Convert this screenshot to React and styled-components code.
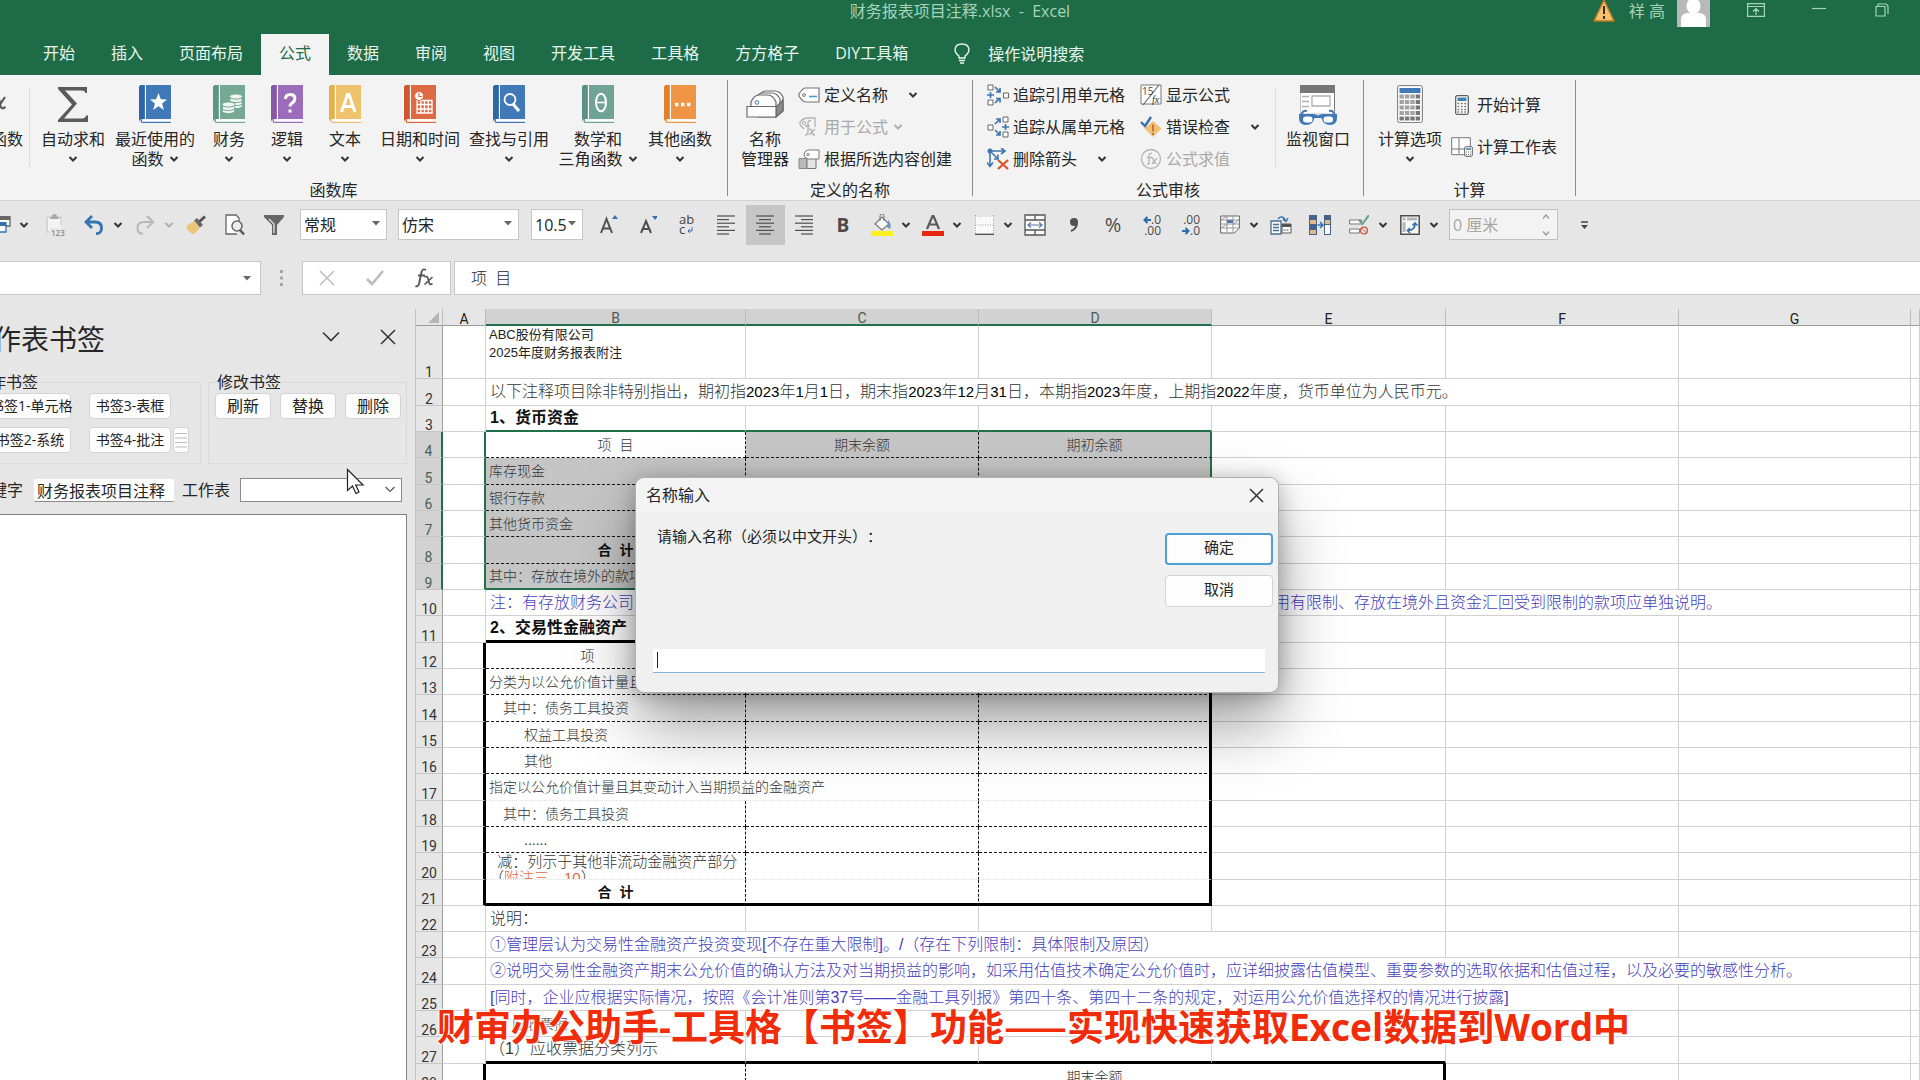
import React from "react";
import styled, { createGlobalStyle, css } from "styled-components";

const UI = `"Open Sans", "Noto Sans CJK SC", sans-serif`;
const CELL = `"Liberation Sans", "Noto Sans CJK SC", sans-serif`;

const Global = createGlobalStyle`
  *, *::before, *::after { box-sizing: border-box; }
  body { margin: 0; overflow: hidden; font: 16px/20px ${UI}; color: #262626; background: #e6e6e6; text-spacing-trim: space-all; }
  button, input, select { font: inherit; color: inherit; margin: 0; }
  button { background: none; border: 0; padding: 0; white-space: nowrap; }
  svg { display: block; flex: none; }
`;

const Page = styled.div`
  position: relative;
  display: flex;
  flex-direction: column;
  height: 100vh;
  overflow: hidden;
`;

/* ---------- title bar and tabs ---------- */

const TitleBar = styled.header`
  display: grid;
  grid-template-columns: 1fr auto 1fr;
  height: 34px;
  background: #1e6c47;
  color: #a6d3b9;
`;
const FileName = styled.h1`
  margin: 0;
  font-size: 16px;
  font-weight: 400;
  line-height: 22px;
  grid-column: 2;
  white-space: pre;
`;
const WindowTools = styled.div`
  display: flex;
  justify-content: flex-end;
  align-items: flex-start;
  padding-right: 31px;
`;
const UserName = styled.span`
  padding: 0 12px 0 14px;
  line-height: 22px;
  white-space: pre;
`;
const WindowButton = styled.button`
  display: flex;
  justify-content: flex-end;
  width: ${(p) => p.$w}px;
  padding-top: 3px;
`;
const Tabs = styled.nav`
  display: flex;
  height: 41px;
  padding-left: 25px;
  background: #1e6c47;
`;
const Tab = styled.button`
  padding: 0 18px;
  line-height: 38px;
  color: ${(p) => (p.$on ? "#1e6c47" : "#e9f5ee")};
  background: ${(p) => (p.$on ? "#f3f3f3" : "transparent")};
  display: flex;
  align-items: flex-start;
`;
const TellMe = styled.button`
  display: flex;
  align-items: center;
  gap: 18px;
  padding: 0 0 2px 28px;
  color: #e9f5ee;
`;

/* ---------- ribbon ---------- */

const Ribbon = styled.section`
  display: flex;
  height: 126px;
  background: #f3f3f3;
  border-bottom: 1px solid #d2d2d2;
`;
const Group = styled.div`
  display: flex;
  flex-direction: column;
  width: ${(p) => p.$w}px;
`;
const GroupBody = styled.div`
  display: flex;
  height: 105px;
  padding-left: ${(p) => p.$pad || 0}px;
`;
const GroupName = styled.div`
  text-align: center;
  padding-right: ${(p) => p.$pad || 0}px;
`;
const Separator = styled.div`
  width: 1px;
  height: 116px;
  margin-top: 5px;
  background: #8c8c8c;
`;
const SoftSeparator = styled.div`
  width: 1px;
  height: 80px;
  margin-top: 12px;
  background: #dcdcdc;
`;
const BigButton = styled.button`
  display: flex;
  flex-direction: column;
  align-items: ${(p) => (p.$end ? "flex-end" : "center")};
  width: ${(p) => p.$w}px;
  padding: 10px ${(p) => (p.$end ? 6 : 0)}px 0 0;
  overflow: ${(p) => (p.$end ? "hidden" : "visible")};
`;
const BigIcon = styled.span`
  height: 38px;
  margin-bottom: 6px;
  padding-right: ${(p) => (p.$end ? 17 : 0)}px;
`;
const Line = styled.span`
  display: flex;
  align-items: center;
  gap: 5px;
  height: 20px;
`;
const SmallColumn = styled.div`
  display: flex;
  flex-direction: column;
  width: ${(p) => p.$w}px;
  padding-top: ${(p) => (p.$tall ? 9 : 4)}px;
`;
const SmallButton = styled.button`
  display: flex;
  align-items: center;
  gap: 4px;
  height: ${(p) => (p.$tall ? 42 : 32)}px;
  color: ${(p) => (p.$off ? "#a9a9a9" : "#262626")};
`;
const SmallIcon = styled.span`
  display: flex;
  justify-content: center;
  width: 22px;
`;
const ChevronSlot = styled.span`
  padding-left: ${(p) => (p.$near ? 1 : 16)}px;
`;

/* ---------- quick access bar ---------- */

const QuickBar = styled.section`
  display: flex;
  align-items: flex-start;
  height: 60px;
  padding-top: 4px;
`;
const Tool = styled.button`
  display: flex;
  align-items: center;
  height: 40px;
  width: ${(p) => (p.$menu ? 51 : 39)}px;
  background: ${(p) => (p.$on ? "#c6c6c6" : "transparent")};
`;
const ClippedTool = styled(Tool)`
  width: 36px;
`;
const ToolIcon = styled.span`
  display: flex;
  justify-content: ${(p) => (p.$half ? "flex-end" : "center")};
  width: ${(p) => (p.$half ? 19 : 38)}px;
  padding-right: ${(p) => (p.$half ? 8 : 0)}px;
`;
const Picker = styled.label`
  position: relative;
  display: block;
  flex: none;
  width: ${(p) => p.$w}px;
  margin: 4px ${(p) => p.$gap}px 0 0;
  > svg { position: absolute; right: 7px; top: 12px; }
`;
const PickerSelect = styled.select`
  appearance: none;
  width: 100%;
  height: 31px;
  padding: 0 3px;
  border: 1px solid #c6c6c6;
  border-radius: 0;
  background: #fff;
`;
const Spin = styled.label`
  display: flex;
  align-items: center;
  justify-content: space-between;
  width: 109px;
  height: 31px;
  margin: 4px 22px 0 7px;
  padding-right: 7px;
  border: 1px solid #c0c0c0;
  background: #f3f3f3;
`;
const SpinInput = styled.input`
  width: 80px;
  padding: 0 3px;
  border: 0;
  background: none;
  color: #a8a8a0;
`;
const MoreTools = styled.button`
  height: 40px;
`;

/* ---------- formula bar ---------- */

const FormulaBar = styled.section`
  display: flex;
  height: 34px;
`;
const NameBox = styled.label`
  display: flex;
  align-items: center;
  width: 261px;
  padding-right: 9px;
  background: #fff;
  border: solid #c6c6c6;
  border-width: 1px 1px 1px 0;
`;
const NameInput = styled.input`
  flex: 1;
  min-width: 0;
  border: 0;
  background: none;
`;
const Grip = styled.div`
  display: grid;
  place-items: center;
  width: 41px;
`;
const FormulaTools = styled.div`
  display: flex;
  align-items: center;
  justify-content: space-around;
  width: 149px;
  margin-right: 3px;
  background: #fff;
  border: 1px solid #c6c6c6;
`;
const FormulaInput = styled.input`
  flex: 1;
  padding: 0 16px;
  font-weight: 300;
  background: #fff;
  border: 1px solid #c6c6c6;
  border-right: 0;
`;

/* ---------- task pane ---------- */

const Work = styled.main`
  display: flex;
  flex: 1;
  min-height: 0;
  padding-top: 14px;
`;
const Pane = styled.aside`
  display: flex;
  flex-direction: column;
  width: 415px;
  padding-right: 8px;
  overflow: hidden;
`;
const PaneHead = styled.div`
  display: flex;
  align-items: center;
  justify-content: flex-end;
  height: 56px;
  padding-right: 11px;
`;
const PaneTitle = styled.h2`
  margin: 0 217px 0 0;
  padding-top: 4px;
  font-size: 28px;
  font-weight: 400;
  line-height: 40px;
  white-space: nowrap;
`;
const PaneTools = styled.div`
  display: flex;
  gap: 40px;
`;
const Groups = styled.div`
  display: flex;
  justify-content: flex-end;
  gap: 7px;
`;
const Fieldset = styled.fieldset`
  flex: none;
  width: ${(p) => p.$w}px;
  height: 92px;
  margin: 7px 0 0;
  padding: 0 ${(p) => p.$end}px 0 5px;
  border: 1px solid #dadada;
  > legend { margin-left: 3px; padding: 0; }
`;
const ButtonGrid = styled.div`
  display: grid;
  grid-template-columns: ${(p) => p.$cols};
  gap: 8px ${(p) => p.$gap}px;
  padding-top: 1px;
  align-items: center;
  justify-content: end;
`;
const PaneButton = styled.button`
  width: ${(p) => (p.$small ? "82px" : "auto")};
  height: 26px;
  font-size: ${(p) => (p.$small ? 14 : 16)}px;
  line-height: 22px;
  background: #fdfdfd;
  border: 1px solid #d4d4d4;
  border-radius: 4px;
  color: #222;
`;
const LinesButton = styled(PaneButton)`
  display: grid;
  place-items: center;
`;
const Fields = styled.div`
  display: flex;
  align-items: center;
  justify-content: flex-end;
  height: 48px;
  padding-right: 5px;
  margin-top: 2px;
  white-space: nowrap;
`;
const Keyword = styled.input`
  flex: none;
  width: 140px;
  height: 23px;
  margin: 0 8px 0 11px;
  padding: 0 3px;
  border: 0;
  border-bottom: 1px solid #8a8a8a;
  border-radius: 2px;
  background: #fff;
`;
const SheetPick = styled(Picker)`
  margin: 0 0 0 10px;
  > svg { right: 7px; top: 8px; }
`;
const SheetSelect = styled(PickerSelect)`
  display: block;
  height: 24px;
  border-color: #8a8a8a;
`;
const Results = styled.div`
  flex: 1;
  width: 100%;
  background: #fff;
  border: 1px solid #808080;
  border-width: 1px 1px 0 0;
`;

/* ---------- sheet ---------- */

const SheetArea = styled.div`
  flex: 1;
  min-width: 0;
  overflow: hidden;
  border-left: 1px solid #c4c4c4;
  background: #fff;
`;
const Grid = styled.table`
  width: 100%;
  table-layout: fixed;
  border-collapse: separate;
  border-spacing: 0;
  font-family: ${CELL};
  font-size: 14px;
  line-height: 18px;
`;
const ColHead = styled.th`
  height: 17px;
  padding: 0;
  font: 400 14px/12px Roboto, sans-serif;
  vertical-align: bottom;
  color: ${(p) => (p.$on ? "#4a5a52" : "#222")};
  background: ${(p) => (p.$on ? "#d2d2d2" : "#e6e6e6")};
  border-right: 1px solid #bdbdbd;
  border-bottom: ${(p) => (p.$on ? "2px solid #21704b" : "1px solid #9c9c9c")};
`;
const Corner = styled.th`
  padding: 0;
  background: #e6e6e6;
  border-right: 1px solid #bdbdbd;
  border-bottom: 1px solid #9c9c9c;
  > svg { margin-left: auto; margin-right: 3px; }
`;
const RowHead = styled.th`
  height: ${(p) => p.$h}px;
  padding: 0;
  font: 400 14px/12px Roboto, sans-serif;
  vertical-align: bottom;
  color: ${(p) => (p.$on ? "#4c6058" : "#333")};
  background: ${(p) => (p.$on ? "#d2d2d2" : "#e6e6e6")};
  border-right: ${(p) => (p.$on ? "2px solid #21704b" : "1px solid #9c9c9c")};
  border-bottom: 1px solid #c6c6c6;
`;
const lines = {
  grid: "1px solid #d0d0d0",
  dash: "1px dashed #111",
  faint: "1px dotted #e0e0e0",
  green: "2px solid #21704b",
  thick: "3px solid #000",
};
const Cell = styled.td`
  padding: 0 0 0 ${(p) => 3 + (p.$indent || 0)}px;
  vertical-align: ${(p) => p.$v || "middle"};
  white-space: nowrap;
  font-weight: 300;
  color: #333;
  border-right: ${(p) => lines[p.$r || "grid"]};
  border-bottom: ${(p) => lines[p.$b || "grid"]};
  ${(p) => p.$fill && css`background: #c5c5c5;`}
  ${(p) => p.$mid && css`text-align: center; padding: 0;`}
  ${(p) => p.$bold && css`font-weight: 700; color: #111;`}
  ${(p) => p.$note && css`color: #4640bd;`}
  ${(p) => p.$size && css`font-size: ${p.$size}px;`}
`;
const Company = styled.div`
  font-size: 13px;
  font-weight: 400;
  color: #222;
`;
const Clip = styled.div`
  display: flex;
  flex-direction: column;
  height: 25px;
  font-size: 15px;
  line-height: 16px;
  overflow: hidden;
`;
const Warm = styled.span`
  color: #e2683c;
`;
const Num = styled.span`
  font-size: 15px;
  font-weight: 400;
  color: #000;
`;

/* ---------- dialog, caption, pointer ---------- */

const Dialog = styled.form`
  position: absolute;
  top: 477px;
  left: 635px;
  width: 644px;
  height: 216px;
  background: #f0f0f0;
  border: 1px solid #b0b0b0;
  border-radius: 9px;
  box-shadow: 0 32px 64px rgba(0, 0, 0, 0.38), 0 2px 20px rgba(0, 0, 0, 0.25);
`;
const DialogHead = styled.div`
  display: flex;
  align-items: center;
  justify-content: space-between;
  height: 34px;
  padding: 0 14px 0 10px;
  border-radius: 9px 9px 0 0;
  background: #f4f4f4;
`;
const DialogBody = styled.div`
  display: flex;
  justify-content: space-between;
  height: 137px;
  padding: 14px 5px 0 21px;
`;
const Prompt = styled.label`
  font-size: 15px;
  color: #222;
`;
const DialogButtons = styled.div`
  display: flex;
  flex-direction: column;
  gap: 10px;
  padding-top: 7px;
`;
const DialogButton = styled.button`
  width: 108px;
  height: 32px;
  font-size: 15px;
  line-height: 24px;
  padding-bottom: 4px;
  background: #fdfdfd;
  border: ${(p) => (p.$main ? "2px solid #4f9fd4" : "1px solid #d4d4d4")};
  border-radius: 4px;
`;
const DialogInput = styled.input`
  display: block;
  width: 612px;
  height: 24px;
  margin-left: 17px;
  padding: 0 3px;
  background: linear-gradient(#222, #222) 4px 3px / 1px 16px no-repeat #fff;
  border: 0;
  border-bottom: 1px solid #86b4dc;
  outline: 0;
`;
const Caption = styled.p`
  position: absolute;
  left: 437px;
  top: 999px;
  margin: 0;
  font: 700 37px/52px ${UI};
  color: #f02c0a;
  white-space: nowrap;
  text-shadow: 0 0 3px #fff, 0 0 3px #fff, 0 0 2px #fff;
`;
const Dash = styled.span`
  font-family: "Noto Sans CJK SC", sans-serif;
`;
const Pointer = styled.div`
  position: absolute;
  left: 346px;
  top: 468px;
`;

/* ---------- drawings ---------- */

const Svg = ({ w, h, children, ...rest }) => (
  <svg width={w} height={h} viewBox={`0 0 ${w} ${h}`} fill="none" aria-hidden="true" {...rest}>{children}</svg>
);
const Chevron = ({ c = "#333" }) => (
  <Svg w={10} h={8}><path d="M1.5 2 5 5.5 8.5 2" stroke={c} strokeWidth="2" /></Svg>
);
const Caret = () => <Svg w={8} h={5}><path d="M0 0h8L4 4.5z" fill="#666" /></Svg>;

const Book = ({ c, dark, children }) => (
  <Svg w={32} h={38}>
    <path d="M3 0h29v34H3q-3 0-3 3V3q0-3 3-3z" fill={c} />
    <path d="M3 0h2v34H3q-3 0-3 3V3q0-3 3-3z" fill={dark} />
    <path d="M6.5 0v34" stroke="#fff" strokeWidth="1" />
    <path d="M32 37.300H3a2 2 0 0 1 0-3" stroke={c} strokeWidth="1.5" />
    <path d="M3 35.5h29" stroke="#fff" strokeWidth="2" />
    {children}
  </Svg>
);
const Sigma = () => (
  <Svg w={32} h={38}><path d="M1 2h29v6h-1.5q-.5-2.5-4-2.5H8L20 18.5 7 33.5h18q3.5 0 4-3H31V37H1v-2l14-15.5L1 4z" fill="#5b5b5b" /></Svg>
);
const icons = {
  recent: <Book c="#4179b8" dark="#2f66a5"><path d="m19.5 8 2.300 6.200 6.200.2-4.900 4 1.800 6.600-5.400-3.800-5.400 3.800 1.800-6.600-4.900-4 6.200-.2z" fill="#fff" /></Book>,
  money: (
    <Book c="#76a896" dark="#5f9583">
      <g fill="#eef5f2" stroke="#76a896" strokeWidth="1">
        <ellipse cx="23" cy="21" rx="6.5" ry="2.6" /><ellipse cx="23" cy="18" rx="6.5" ry="2.6" /><ellipse cx="23" cy="15" rx="6.5" ry="2.6" /><ellipse cx="23" cy="11.5" rx="6.5" ry="2.6" />
        <ellipse cx="15.5" cy="26" rx="6.5" ry="2.6" /><ellipse cx="15.5" cy="23" rx="6.5" ry="2.6" /><ellipse cx="15.5" cy="19.5" rx="6.5" ry="2.6" />
      </g>
    </Book>
  ),
  logic: <Book c="#9a6cb9" dark="#8757a8"><path d="M14.5 14q0-4.5 4.700-4.5t4.700 4q0 2.5-2.5 4.200T19 21.5M19 24.5v3" stroke="#fff" strokeWidth="3" /></Book>,
  text: <Book c="#efc36b" dark="#e3b04f"><path d="m12.5 27 6-17.5h1.5L26 27M14.5 21.5h9.5" stroke="#fff" strokeWidth="3" /></Book>,
  date: (
    <Book c="#de6a42" dark="#cf5730">
      <path d="M13 15.5h15V28H13zM13 19.5h15M13 24h15M16.800 15.5V28M20.5 15.5V28M24.300 15.5V28" stroke="#fff" strokeWidth="1.3" />
      <circle cx="15" cy="11" r="4.5" fill="#fff" stroke="#de6a42" /><path d="M15 8v3.5h3" stroke="#de6a42" strokeWidth="1.2" />
    </Book>
  ),
  lookup: <Book c="#4179b8" dark="#2f66a5"><circle cx="17" cy="14.5" r="5.5" stroke="#fff" strokeWidth="1.8" /><path d="m20 19 6 7" stroke="#fff" strokeWidth="3" /></Book>,
  math: <Book c="#6fa393" dark="#5a9180"><ellipse cx="19" cy="17.5" rx="5" ry="8.7" stroke="#fff" strokeWidth="2" /><path d="M14 17.5h10" stroke="#fff" strokeWidth="1.6" /></Book>,
  more: <Book c="#ee9444" dark="#e17f2b"><path d="M11 19.5h3.400M17 19.5h3.400M23 19.5h3.400" stroke="#fff" strokeWidth="3.4" /></Book>,
  fx: <Svg w={28} h={38}><path d="M16 12q4-2 5 2l1.5 7q1 4 5 1M27 12l-8 12" stroke="#5b5b5b" strokeWidth="2.2" /></Svg>,
  manager: (
    <Svg w={38} h={38}>
      <g fill="#fdfdfd" stroke="#6b6b6b" strokeWidth="1.2">
        <path d="M12 12q3-6 8-6h9q5 0 8 6v14l-7 6H12z" /><path d="M9 14q3-6 8-6h9q5 0 8 6v8H9z" /><path d="M5 17q3-7 8-7h9q5 0 8 7v6H5z" />
        <path d="M30 22v10l7-6V15z" fill="#8a8a8a" /><path d="M1 21.5h29V32H1z" />
      </g>
      <circle cx="11" cy="17.5" r="1.8" stroke="#4179b8" />
    </Svg>
  ),
  watch: (
    <Svg w={40} h={40}>
      <path d="M2.5 4h34v25h-34z" fill="#fff" stroke="#c4c4c4" /><path d="M36.5 4v22" stroke="#777" /><path d="M2 0h35v8H2z" fill="#767676" />
      <path d="M14 11h18v10H14zM4 11.5h7M4 16.5h7M4 21.5h7" stroke="#b0b0b0" strokeWidth="1.3" />
      <path d="M3 30q2-5 6-4M37 30q-2-5-6-4" stroke="#4179b8" strokeWidth="2" />
      <path d="M1 29h15l4 1.500L24 29h15v4q0 7-7 7t-8.500-7h-7Q15 40 8 40t-7-7z" fill="#4179b8" />
      <rect x="5" y="31.5" width="9.5" height="6" rx="3" fill="#fff" /><rect x="25.5" y="31.5" width="9.5" height="6" rx="3" fill="#fff" />
    </Svg>
  ),
  calc: (
    <Svg w={26} h={38}>
      <rect x=".6" y=".6" width="24.8" height="37" rx="2" fill="#fdfdfd" stroke="#777" />
      <path d="M2.5 3h21v5h-21z" fill="#4179b8" />
      {[0, 1, 2, 3, 4].map((r) => [0, 1, 2, 3].map((k) => <rect key={`${r}${k}`} x={2.5 + k * 5.4} y={9.5 + r * 5.5} width="4.4" height="4" fill={r === 4 || k === 3 ? "#767676" : "#a2a2a2"} />))}
    </Svg>
  ),
};
const small = {
  define: <Svg w={22} h={16}><path d="M7 1h14v14H7q-3-1-6-6V7q3-5 6-6z" fill="#fff" stroke="#777" strokeWidth="1.2" /><circle cx="6" cy="8" r="1.4" stroke="#777" /><path d="M11 9.500h8" stroke="#4a9ad0" strokeWidth="1.6" /></Svg>,
  use: <Svg w={22} h={20}><path d="M8 1h9v9M6 12q-3-2-4-5V5q2-3 6-4" stroke="#b2b2b2" strokeWidth="1.3" /><circle cx="6" cy="6" r="1.6" stroke="#b2b2b2" /><path d="M13 4q-3-1-3 2v9q0 3-3 3M7 9h5M11 12q3 0 3 3t3 3M17 12l-6 6" stroke="#b2b2b2" strokeWidth="1.4" /></Svg>,
  create: <Svg w={22} h={20}><path d="M1 9.500h8v10H1z" fill="#b9b9b9" stroke="#8a8a8a" /><path d="M9 9.500h9v10H9z" fill="#e4e4e4" stroke="#777" /><path d="M10 1h11v9H10Q6 9 6 5.500T10 1z" fill="#fff" stroke="#777" /><circle cx="10" cy="5.500" r="1.2" stroke="#777" /></Svg>,
  precedents: <Svg w={22} h={22}><path d="M1 1h5v5H1zM1 16h5v5H1zM16.500 9h5v5h-5z" fill="#fff" stroke="#666" /><path d="M0 11h7M3.500 8v6M8 3l5 5M13 4v4H9M8 19l5-5M9 14.500h4v4" stroke="#3f75b0" strokeWidth="1.7" /></Svg>,
  dependents: <Svg w={22} h={22}><path d="M16 1h5v5h-5zM16 16h5v5h-5zM1 9h5v5H1z" fill="#fff" stroke="#666" /><path d="M15 11h7M18.500 8v6M8 8l5-5M9 3h4v4M8 14l5 5M13 15v4H9" stroke="#3f75b0" strokeWidth="1.7" /></Svg>,
  remove: <Svg w={22} h={22}><path d="M3 4v14M0 14.500l3 4 3-4M5 3h12M14 0l4 3-4 3M5 5l6 6M11 6.500V11H7" stroke="#3f75b0" strokeWidth="1.6" /><circle cx="3" cy="3" r="2.5" fill="#3f75b0" /><path d="m11 12 10 9M21 12l-10 9" stroke="#d9572c" strokeWidth="2.3" /></Svg>,
  show: <Svg w={22} h={22}><path d="M1 1h20v19H1z" fill="#fff" stroke="#777" /><path d="M19 1 3 21" stroke="#666" strokeWidth="1.2" /><text x="2" y="10.500" fontSize="10" fontFamily="Open Sans" fill="#444">15</text><text x="12" y="18.500" fontSize="10" fontStyle="italic" fontFamily="Liberation Serif" fill="#333">fx</text></Svg>,
  check: <Svg w={22} h={22}><path d="m13 5 8.500 7.500L13 21l-8.500-8.500z" fill="#efc173" /><path d="M13 8.500v7M13 17v2" stroke="#c05f2c" strokeWidth="1.6" /><path d="m1 6 4 4L11 1" stroke="#3b70a8" strokeWidth="2.4" /></Svg>,
  evaluate: <Svg w={22} h={22}><circle cx="11" cy="11" r="9.5" stroke="#b5b5b5" strokeWidth="1.3" /><path d="M12 5.500q-3-.5-3 2v7q0 2-2 2M7 9.500h5M11.500 10q2 0 2 2.500t3 3M17 10l-5 6" stroke="#b5b5b5" strokeWidth="1.3" /></Svg>,
  calcNow: <Svg w={14} h={20}><rect x=".7" y=".7" width="12.6" height="18.6" rx="1.5" fill="#fff" stroke="#5f5f5f" strokeWidth="1.3" /><path d="M2.5 2.5h9v3.500h-9z" fill="#3f84ae" /><path d="M2.5 8.500h9M2.5 11.500h9M2.5 14.500h9M2.5 17h9" stroke="#777" strokeWidth="1.6" strokeDasharray="1.800 1.600" /></Svg>,
  calcSheet: <Svg w={22} h={20}><path d="M.7.7h18.600v17H.7zM8 1v16M1 12h18" fill="#fff" stroke="#777" /><rect x="13.7" y="9.7" width="7.6" height="9.6" rx="1" fill="#fff" stroke="#5f5f5f" /><path d="M15 12h5" stroke="#3f84ae" strokeWidth="1.6" /><path d="M15 15h5M15 17.500h5" stroke="#777" strokeDasharray="1 1" /></Svg>,
};
const Align = ({ xs }) => <Svg w={18} h={20}>{xs.map(([a, b], i) => <path key={i} d={`M${a} ${1 + i * 3.6}H${b}`} stroke="#4f4f4f" strokeWidth="1.2" />)}</Svg>;
const Letter = styled.span`
  font: ${(p) => p.$w || 400} ${(p) => p.$s || 20}px/20px ${UI};
  color: #4a4a4a;
`;
const Decimal = styled.span`
  display: grid;
  font: 400 12px/11px ${UI};
  color: #4a4a4a;
  text-align: right;
  > span { display: flex; align-items: center; justify-content: flex-end; }
`;
const LeftBlue = () => <Svg w={8} h={8}><path d="M8 4H2M4.500 1l-3 3 3 3" stroke="#2b6cab" strokeWidth="2" /></Svg>;
const RightBlue = () => <Svg w={8} h={8}><path d="M0 4h6M3.500 1l3 3-3 3" stroke="#2b6cab" strokeWidth="2" /></Svg>;

const toolSets = {
  left: [
    ["粘贴值", <Svg w={20} h={22} key="i"><path d="M3 3h13v15H3z" fill="#f3f3f3" /><path d="M2 3v15h3M3 3h13v8" stroke="#cfcfcf" strokeWidth="1.4" /><path d="M5 5V3h2q0-3 2.500-3T12 3h2v2z" fill="#a8a8a8" /><path d="M5 14h15v8H5z" fill="#e6e6e6" /><text x="6" y="21.500" fontSize="8" fontWeight="600" fontFamily="Open Sans" fill="#8e8e8e">123</text></Svg>],
    ["撤消", <Svg w={20} h={20} key="i"><path d="M8 1 2 7l6 6M3 7h8q6.500 0 6.500 6t-5.500 5.500" stroke="#3573b0" strokeWidth="2.8" /></Svg>, "#333"],
    ["恢复", <Svg w={20} h={20} key="i"><path d="m12 1 6 6-6 6M17 7H9q-6.500 0-6.500 6T8 18.500" stroke="#b9b9b9" strokeWidth="2.2" /></Svg>, "#b0b0b0"],
    ["格式刷", <Svg w={20} h={20} key="i"><path d="m0 11 8-5 6 7-6 6q-5 0-8-8z" fill="#ecc67c" /><path d="m8 5.500 3-2.500 6 7-3 2.500z" fill="#666" /><path d="m13.500 6.500 5.500-5" stroke="#555" strokeWidth="3" /></Svg>],
    ["打印预览", <Svg w={20} h={22} key="i"><path d="M14 7V4l-3-3H1v19h11" fill="#fdfdfd" stroke="#666" strokeWidth="1.3" /><circle cx="12" cy="12" r="5" fill="#eee" stroke="#666" strokeWidth="1.5" /><path d="m15 16 4 4.500" stroke="#555" strokeWidth="2.4" /></Svg>],
    ["筛选", <Svg w={20} h={22} key="i"><path d="M0 1h20v2l-7 8v10H8V11L0 3z" fill="#666" /><path d="m5 5 5 5v9" stroke="#ddd" strokeWidth="1.4" /></Svg>],
  ],
  right: [
    ["增大字号", <Svg w={18} h={20} key="i"><path d="m1 18 5.500-14L12 18M3 13.500h7" stroke="#4f4f4f" strokeWidth="2" /><path d="m12 4 3-4 3 4z" fill="#3573b0" /></Svg>],
    ["减小字号", <Svg w={18} h={20} key="i"><path d="m2 18 5-12 5 12M4 14h6" stroke="#4f4f4f" strokeWidth="2" /><path d="m13 1 3 4 3-4z" fill="#3573b0" /></Svg>],
    ["自动换行", <Svg w={18} h={20} key="i"><text x="1" y="9" fontSize="13" fontFamily="Open Sans" fill="#444">ab</text><text x="1" y="19" fontSize="13" fontFamily="Open Sans" fill="#444">c</text><path d="M14 12v4h-4M12 14l-2 2 2 2" stroke="#3573b0" /></Svg>],
    ["左对齐", <Align key="i" xs={[[0, 18], [0, 12], [0, 18], [0, 12], [0, 18], [0, 12]]} />],
    ["居中", <Align key="i" xs={[[0, 18], [3, 15], [0, 18], [3, 15], [0, 18], [3, 15]]} />, null, true],
    ["右对齐", <Align key="i" xs={[[0, 18], [6, 18], [0, 18], [6, 18], [0, 18], [6, 18]]} />],
    ["加粗", <Letter key="i" $w={700} $s={19}>B</Letter>],
    ["填充颜色", <Svg w={22} h={22} key="i"><path d="M0 17h22v5H0z" fill="#fdf11d" /><path d="m4 10 7-7 7 7-7 6z" fill="#fafafa" stroke="#777" strokeWidth="1.2" /><path d="M9 7V2q0-2 2-2t2 2v5" stroke="#777" /><path d="M17 6q4 4 2 9l-3-2 1-3z" fill="#6f94ba" /></Svg>, "#333"],
    ["字体颜色", <Svg w={22} h={22} key="i"><path d="M0 17h22v5H0z" fill="#e8240c" /><path d="M5 15 10.500 2h1L17 15M7 10.500h8" stroke="#5a5a5a" strokeWidth="2.2" /></Svg>, "#333"],
    ["边框", <Svg w={19} h={20} key="i"><path d="M0 0h19v20H0z" fill="#fafafa" /><path d="M.5 0v19M18.500 0v19M0 1h19M0 10h19" stroke="#999" strokeDasharray="1 1.500" /><path d="M0 19.300h19" stroke="#555" strokeWidth="1.4" /></Svg>, "#333"],
    ["合并单元格", <Svg w={22} h={22} key="i"><path d="M1 1h20v20H1zM1 6h20M1 16h20M11 1v5M11 16v5" fill="#fafafa" stroke="#555" strokeWidth="1.3" /><path d="M4 11h14M7 8.500 4 11l3 2.500M15 8.500l3 2.500-3 2.500" stroke="#587aa5" strokeWidth="1.2" /></Svg>],
    ["千位分隔", <Svg w={10} h={16} key="i"><circle cx="5" cy="5" r="4" fill="#505050" /><path d="M8 5q0 7-6 9" stroke="#505050" strokeWidth="2" /></Svg>],
    ["百分比", <Letter key="i">%</Letter>],
    ["增加小数位", <Decimal key="i"><span><LeftBlue />.0</span><span>.00</span></Decimal>],
    ["减少小数位", <Decimal key="i"><span>.00</span><span><RightBlue />.0</span></Decimal>],
    ["套用表格", <Svg w={20} h={20} key="i"><path d="M.6 1h18.800v12l-5 5H.6z" fill="#fafafa" stroke="#666" /><path d="M1 5h18M1 9h18M1 13h18M7 1v16M13 1v16M1 5l6-4M1 13l6-4M13 9l6-4" stroke="#999" /><path d="M7 5h6v3H7z" fill="#4f7bb0" /></Svg>, "#333"],
    ["插入工作表", <Svg w={22} h={20} key="i"><path d="M1 6h10v13H1zM3 9.500h6M3 12.500h6M3 15.500h6" fill="#fafafa" stroke="#4a6f93" strokeWidth="1.3" /><path d="M8 4q4-5 8 2M13 4.500l3 2L18 3" stroke="#3573b0" strokeWidth="1.4" /><path d="M12 9h9v9h-9z" fill="#fff" stroke="#555" /><path d="M12 9h9v3h-9z" fill="#555" /><path d="M13.500 15h6" stroke="#555" strokeDasharray="2 1" /></Svg>],
    ["分列", <Svg w={22} h={20} key="i"><path d="M0 0h8v20H0zM15 0h7v20h-7z" fill="#44628c" /><path d="M1 5h6v4H1zM1 15h6v4H1zM16 5h5v4h-5z" fill="#e1bb80" /><path d="M16 10h5v9h-5z" fill="#fff" /><path d="M8.500 10h5M11 7l3 3-3 3" stroke="#3573b0" strokeWidth="1.6" /></Svg>],
    ["数据验证", <Svg w={20} h={20} key="i"><path d="M.6 5h12v4H.6zM.6 14h10v4H.6z" fill="#fafafa" stroke="#777" /><path d="m10 5 3.500 4L20 0" stroke="#6aa184" strokeWidth="2" /><circle cx="15" cy="15.500" r="3.4" stroke="#d0583f" strokeWidth="1.4" /><path d="m12.500 13 5 5" stroke="#d0583f" /></Svg>, "#333"],
    ["数据透视表", <Svg w={20} h={20} key="i"><path d="M.8.8h18.400v18.400H.8z" fill="#fafafa" stroke="#4d4d4d" strokeWidth="1.5" /><path d="M2.500 2.500h3v3h-3zM7 2.500h10v3H7zM2.500 7h3v10h-3z" fill="#b5b5b5" /><path d="M8 15.500q7 0 7-7M10 13l-2.500 2.500L10 18M12.500 10.500 15 8l2.500 2.500" stroke="#3573b0" strokeWidth="1.7" /></Svg>, "#333"],
  ],
};
const Close = ({ s = 15, c = "#333" }) => <Svg w={s} h={s}><path d={`M1 1 ${s - 1} ${s - 1}M${s - 1} 1 1 ${s - 1}`} stroke={c} strokeWidth="1.5" /></Svg>;

/* ---------- data ---------- */

const tabs = ["开始", "插入", "页面布局", "公式", "数据", "审阅", "视图", "开发工具", "工具格", "方方格子", "DIY工具箱"];
const library = [
  [74, <Sigma key="s" />, "自动求和", ""],
  [90, icons.recent, "最近使用的", "函数"],
  [58, icons.money, "财务", ""],
  [58, icons.logic, "逻辑", ""],
  [58, icons.text, "文本", ""],
  [92, icons.date, "日期和时间", ""],
  [86, icons.lookup, "查找与引用", ""],
  [92, icons.math, "数学和", "三角函数"],
  [72, icons.more, "其他函数", ""],
];
const heights = [53, 27, 26, 26, 27, 26, 26, 27, 26, 26, 27, 26, 26, 27, 26, 26, 27, 26, 26, 27, 26, 26, 26, 27, 26, 26, 27, 26];

const withNumbers = (text) =>
  text.split(/(\d+)/).map((part, i) => (/^\d+$/.test(part) ? <Num key={i}>{part}</Num> : part));

const blanks = (n) => Array.from({ length: n }, (_, i) => <Cell key={`x${i}`} />);
const A = (r) => <Cell $r={r} />;

/* One ruled line of a bordered table: first column text, then the C and D cells. */
const ruled = (text, { b = "dash", c = "", d = "", fill, edge = "thick", mid, bold, indent, merge } = {}) => (
  <>
    {A(edge)}
    <Cell $r="dash" $b={b} $fill={fill && fill !== "first"} $mid={mid} $bold={bold} $indent={indent} colSpan={merge ? 2 : 1}>{text}</Cell>
    {!merge && <Cell $r="dash" $b={b} $fill={fill} $mid>{c}</Cell>}
    <Cell $r={edge} $b={b} $fill={fill} $mid>{d}</Cell>
    {blanks(4)}
  </>
);
const heading = (text, b) => (
  <>
    {A()}
    <Cell $b={b} $bold $size={16} $indent={1}>{text}</Cell>
    <Cell $b={b} /><Cell $b={b} />
    {blanks(4)}
  </>
);
const wide = (text, span, extra = {}) => (
  <>
    {A()}
    <Cell colSpan={span} $size={16} $indent={1} {...extra}>{text}</Cell>
    {blanks(7 - span)}
  </>
);

const rows = [
  <>{A()}<Cell $v="top"><Company>ABC股份有限公司<br />2025年度财务报表附注</Company></Cell>{blanks(6)}</>,
  wide(withNumbers("以下注释项目除非特别指出，期初指2023年1月1日，期末指2023年12月31日，本期指2023年度，上期指2022年度，货币单位为人民币元。"), 5),
  heading("1、货币资金", "green"),
  ruled("项\u00a0\u00a0目", { fill: "first", edge: "green", mid: true, c: "期末余额", d: "期初余额" }),
  ruled("库存现金", { fill: true, edge: "green" }),
  ruled("银行存款", { fill: true, edge: "green" }),
  ruled("其他货币资金", { fill: true, edge: "green" }),
  ruled("合\u00a0\u00a0计", { fill: true, edge: "green", mid: true, bold: true }),
  ruled("其中：存放在境外的款项总额", { fill: true, edge: "green", b: "green" }),
  wide("注：有存放财务公司的款项，应单独说明其存放的金额及利率等情况；因抵押、质押或者冻结等原因对款项的使用有限制、存放在境外且资金汇回受到限制的款项应单独说明。", 6, { $note: true }),
  heading("2、交易性金融资产", "thick"),
  ruled("项\u3000\u3000\u3000目", { mid: true, c: "期末余额", d: "期初余额" }),
  ruled("分类为以公允价值计量且其变动计入当期损益的金融资产"),
  ruled("其中：债务工具投资", { indent: 14 }),
  ruled("权益工具投资", { indent: 35 }),
  ruled("其他", { indent: 35 }),
  ruled("指定以公允价值计量且其变动计入当期损益的金融资产", { merge: true, b: "faint" }),
  ruled("其中：债务工具投资", { indent: 14 }),
  ruled("......", { indent: 35 }),
  ruled(<Clip><span>{"\u00a0\u00a0"}减：列示于其他非流动金融资产部分</span><span>（<Warm>附注三、10</Warm>）</span></Clip>, { b: "faint" }),
  ruled("合\u00a0\u00a0计", { b: "thick", mid: true, bold: true }),
  wide("说明：", 1),
  wide("①管理层认为交易性金融资产投资变现[不存在重大限制]。/（存在下列限制：具体限制及原因）", 4, { $note: true }),
  wide("②说明交易性金融资产期末公允价值的确认方法及对当期损益的影响，如采用估值技术确定公允价值时，应详细披露估值模型、重要参数的选取依据和估值过程，以及必要的敏感性分析。", 6, { $note: true }),
  wide("[同时，企业应根据实际情况，按照《会计准则第37号——金融工具列报》第四十条、第四十二条的规定，对运用公允价值选择权的情况进行披露]", 5, { $note: true }),
  <>{A()}<Cell $indent={1}>3、应收票据</Cell>{blanks(6)}</>,
  <>{A()}<Cell $b="thick" $size={16}>（1）应收票据分类列示</Cell><Cell $b="thick" /><Cell $b="thick" /><Cell $b="thick" />{blanks(3)}</>,
  <>{A("thick")}<Cell $r="dash" /><Cell colSpan={3} $r="thick" $mid>期末余额</Cell>{blanks(3)}</>,
];

const ToolItem = ({ item: [name, icon, menu, on] }) => (
  <Tool aria-label={name} $menu={!!menu} $on={on}>
    <ToolIcon>{icon}</ToolIcon>
    {menu && <Chevron c={menu} />}
  </Tool>
);
const SmallItem = ({ icon, text, tall, off, menu }) => (
  <SmallButton $tall={tall} $off={off}>
    <SmallIcon>{small[icon]}</SmallIcon>
    {text}
    {menu && <ChevronSlot $near={menu === "near"}><Chevron c={off ? "#b0b0b0" : "#333"} /></ChevronSlot>}
  </SmallButton>
);

export default function App() {
  return (
    <Page>
      <Global />
      <TitleBar>
        <FileName>{"财务报表项目注释.xlsx  -  Excel"}</FileName>
        <WindowTools>
          <Svg w={22} h={22}><path d="M11 0 21 21H1z" fill="#f4c26c" stroke="#b87a22" strokeWidth="1.5" /><path d="M11 6v8M11 16v3" stroke="#3c2c12" strokeWidth="2" /></Svg>
          <UserName>祥 高</UserName>
          <Svg w={33} h={27}><path d="M0 0h33v27H0z" fill="#b9b9b9" /><ellipse cx="16.5" cy="6" rx="7" ry="8" fill="#fff" /><path d="M4 27v-7q0-7 7-7h11q7 0 7 7v7z" fill="#fff" /></Svg>
          <WindowButton $w={55} aria-label="功能区显示选项"><Svg w={18} h={14}><path d="M.6.6h16.800v12.800H.6zM.6 3.500h16.800M9 12V6M6 8.500 9 5.500l3 3" stroke="#a6d3b9" strokeWidth="1.2" /></Svg></WindowButton>
          <WindowButton $w={61} aria-label="最小化"><Svg w={14} h={14}><path d="M0 5.500h14" stroke="#a6d3b9" strokeWidth="1.2" /></Svg></WindowButton>
          <WindowButton $w={63} aria-label="还原"><Svg w={14} h={14}><path d="M1 3.500h9V13H1zM3 3V1h7q3 0 3 3v7" stroke="#a6d3b9" strokeWidth="1.2" /></Svg></WindowButton>
        </WindowTools>
      </TitleBar>
      <Tabs>
        {tabs.map((t) => <Tab key={t} $on={t === "公式"}>{t}</Tab>)}
        <TellMe>
          <Svg w={16} h={21}><path d="M5 15v-2Q1 10 1 6.500 1.500 1 8 1t7 5.500q0 3.500-4 6.500v2zM5 17.500h6M6 20h4" stroke="#e9f5ee" strokeWidth="1.4" /></Svg>
          操作说明搜索
        </TellMe>
      </Tabs>

      <Ribbon>
        <Group $w={727}>
          <GroupBody>
            <BigButton $w={29} $end><BigIcon $end>{icons.fx}</BigIcon><Line>插入函数</Line></BigButton>
            <SoftSeparator />
            <SmallColumn $w={6} />
            {library.map(([w, icon, one, two]) => (
              <BigButton key={one} $w={w}>
                <BigIcon>{icon}</BigIcon>
                <Line>{one}</Line>
                <Line>{two}<Chevron /></Line>
              </BigButton>
            ))}
          </GroupBody>
          <GroupName $pad={60}>函数库</GroupName>
        </Group>
        <Separator />
        <Group $w={244}>
          <GroupBody $pad={4}>
            <BigButton $w={66}><BigIcon>{icons.manager}</BigIcon><Line>名称</Line><Line>管理器</Line></BigButton>
            <SmallColumn $w={170}>
              <SmallItem icon="define" text="定义名称" menu />
              <SmallItem icon="use" text="用于公式" off menu="near" />
              <SmallItem icon="create" text="根据所选内容创建" />
            </SmallColumn>
          </GroupBody>
          <GroupName>定义的名称</GroupName>
        </Group>
        <Separator />
        <Group $w={390}>
          <GroupBody $pad={14}>
            <SmallColumn $w={153}>
              <SmallItem icon="precedents" text="追踪引用单元格" />
              <SmallItem icon="dependents" text="追踪从属单元格" />
              <SmallItem icon="remove" text="删除箭头" menu />
            </SmallColumn>
            <SmallColumn $w={135}>
              <SmallItem icon="show" text="显示公式" />
              <SmallItem icon="check" text="错误检查" menu />
              <SmallItem icon="evaluate" text="公式求值" off />
            </SmallColumn>
            <SoftSeparator />
            <BigButton $w={84}><BigIcon>{icons.watch}</BigIcon><Line>监视窗口</Line></BigButton>
          </GroupBody>
          <GroupName>公式审核</GroupName>
        </Group>
        <Separator />
        <Group $w={211}>
          <GroupBody $pad={5}>
            <BigButton $w={82}><BigIcon>{icons.calc}</BigIcon><Line>计算选项</Line><Line><Chevron /></Line></BigButton>
            <SmallColumn $w={120} $tall>
              <SmallItem icon="calcNow" text="开始计算" tall />
              <SmallItem icon="calcSheet" text="计算工作表" tall />
            </SmallColumn>
          </GroupBody>
          <GroupName>计算</GroupName>
        </Group>
        <Separator />
      </Ribbon>

      <QuickBar>
        <ClippedTool aria-label="窗口">
          <ToolIcon $half><Svg w={20} h={20}><path d="M8 2h11v9H8z" fill="#fafafa" stroke="#666" strokeWidth="1.3" /><path d="M8 1h11v4H8z" fill="#666" /><path d="M1 8h14v9H1z" fill="#fafafa" stroke="#3573b0" strokeWidth="1.3" /><path d="M1 7h14v4H1z" fill="#3573b0" /></Svg></ToolIcon>
          <Chevron />
        </ClippedTool>
        {toolSets.left.map((t) => <ToolItem key={t[0]} item={t} />)}
        <SmallColumn $w={6} />
        <Picker $w={87} $gap={11}><PickerSelect aria-label="数字格式"><option>常规</option></PickerSelect><Caret /></Picker>
        <Picker $w={121} $gap={12}><PickerSelect aria-label="字体"><option>仿宋</option></PickerSelect><Caret /></Picker>
        <Picker $w={52} $gap={7}><PickerSelect aria-label="字号"><option>10.5</option></PickerSelect><Caret /></Picker>
        {toolSets.right.map((t) => <ToolItem key={t[0]} item={t} />)}
        <Spin>
          <SpinInput aria-label="高度" defaultValue="0 厘米" disabled />
          <Svg w={8} h={24}><path d="M1 5.500 4 2l3 3.500M1 18.500 4 22l3-3.500" stroke="#999" strokeWidth="1.2" /></Svg>
        </Spin>
        <MoreTools aria-label="更多"><Svg w={9} h={9}><path d="M1 1h7" stroke="#444" strokeWidth="1.5" /><path d="M1 4h7L4.500 8z" fill="#444" /></Svg></MoreTools>
      </QuickBar>

      <FormulaBar>
        <NameBox><NameInput aria-label="名称框" /><Caret /></NameBox>
        <Grip><Svg w={3} h={16}><path d="M0 1.500h3M0 8h3M0 14.500h3" stroke="#a5a5a5" strokeWidth="3" /></Svg></Grip>
        <FormulaTools>
          <button aria-label="取消输入"><Close s={16} c="#bcbcbc" /></button>
          <button aria-label="输入"><Svg w={18} h={16}><path d="m1 9 5 5L17 1" stroke="#bcbcbc" strokeWidth="2.6" /></Svg></button>
          <button aria-label="插入函数"><Svg w={20} h={20}><path d="M11 2q-3.500-2-4.500 2L4 16q-1 3-3.500 2M3 7.500h7" stroke="#555" strokeWidth="1.9" /><path d="M9.500 9q3-1.500 3.500 1.500l1 4q.5 3 3.500 1M17.500 9l-8 7.500" stroke="#555" strokeWidth="1.7" /></Svg></button>
        </FormulaTools>
        <FormulaInput aria-label="编辑栏" defaultValue={"项  目"} />
      </FormulaBar>

      <Work>
        <Pane>
          <PaneHead>
            <PaneTitle>工作表书签</PaneTitle>
            <PaneTools>
              <button aria-label="任务窗格选项"><Svg w={18} h={16}><path d="m1 3.500 8 8 8-8" stroke="#333" strokeWidth="1.6" /></Svg></button>
              <button aria-label="关闭"><Close s={16} /></button>
            </PaneTools>
          </PaneHead>
          <Groups>
            <Fieldset $w={236} $end={11}>
              <legend>操作书签</legend>
              <ButtonGrid $cols="100px 84px 16px" $gap={0}>
                <PaneButton $small>书签1-单元格</PaneButton><PaneButton $small>书签3-表框</PaneButton><span />
                <PaneButton $small>书签2-系统</PaneButton><PaneButton $small>书签4-批注</PaneButton>
                <LinesButton aria-label="列表"><Svg w={12} h={16}><path d="M0 1.500h12M0 6h12M0 10.500h12M0 15h12" stroke="#bdbdbd" /></Svg></LinesButton>
              </ButtonGrid>
            </Fieldset>
            <Fieldset $w={199} $end={5}>
              <legend>修改书签</legend>
              <ButtonGrid $cols="56px 56px 56px" $gap={9}>
                <PaneButton>刷新</PaneButton><PaneButton>替换</PaneButton><PaneButton>删除</PaneButton>
              </ButtonGrid>
            </Fieldset>
          </Groups>
          <Fields>
            <label htmlFor="keyword">关键字</label>
            <Keyword id="keyword" defaultValue="财务报表项目注释" />
            <label htmlFor="sheet">工作表</label>
            <SheetPick as="div" $w={162}>
              <SheetSelect id="sheet"><option> </option></SheetSelect>
              <Svg w={10} h={7}><path d="m.5 1 4.500 4.500L9.500 1" stroke="#555" strokeWidth="1.2" /></Svg>
            </SheetPick>
          </Fields>
          <Results />
        </Pane>

        <SheetArea>
          <Grid>
            <colgroup>
              {[27, 43, 260, 233, 233, 234, 233, 232].map((w, i) => <col key={i} style={{ width: w }} />)}
              <col />
            </colgroup>
            <thead>
              <tr>
                <Corner><Svg w={11} h={11}><path d="M11 0v11H0z" fill="#b5b5b5" /></Svg></Corner>
                {["A", "B", "C", "D", "E", "F", "G", ""].map((c) => <ColHead key={c} scope="col" $on={"BCD".includes(c) && c !== ""}>{c}</ColHead>)}
              </tr>
            </thead>
            <tbody>
              {rows.map((r, i) => (
                <tr key={i}>
                  <RowHead scope="row" $h={heights[i]} $on={i > 2 && i < 9}>{i + 1}</RowHead>
                  {r}
                </tr>
              ))}
            </tbody>
          </Grid>
        </SheetArea>
      </Work>

      <Dialog role="dialog" aria-label="名称输入" onSubmit={(e) => e.preventDefault()}>
        <DialogHead>名称输入<button type="button" aria-label="关闭"><Close s={15} /></button></DialogHead>
        <DialogBody>
          <Prompt htmlFor="name">请输入名称（必须以中文开头）：</Prompt>
          <DialogButtons>
            <DialogButton $main>确定</DialogButton>
            <DialogButton type="button">取消</DialogButton>
          </DialogButtons>
        </DialogBody>
        <DialogInput id="name" />
      </Dialog>

      <Pointer><Svg w={20} h={27}><path d="M1.500 1.500v21l5-4.500 3.500 7.500 3-1.500-3.300-7H17z" fill="#fff" stroke="#222" strokeWidth="1.2" /></Svg></Pointer>
      <Caption>财审办公助手-工具格【书签】功能<Dash>——</Dash>实现快速获取Excel数据到Word中</Caption>
    </Page>
  );
}
